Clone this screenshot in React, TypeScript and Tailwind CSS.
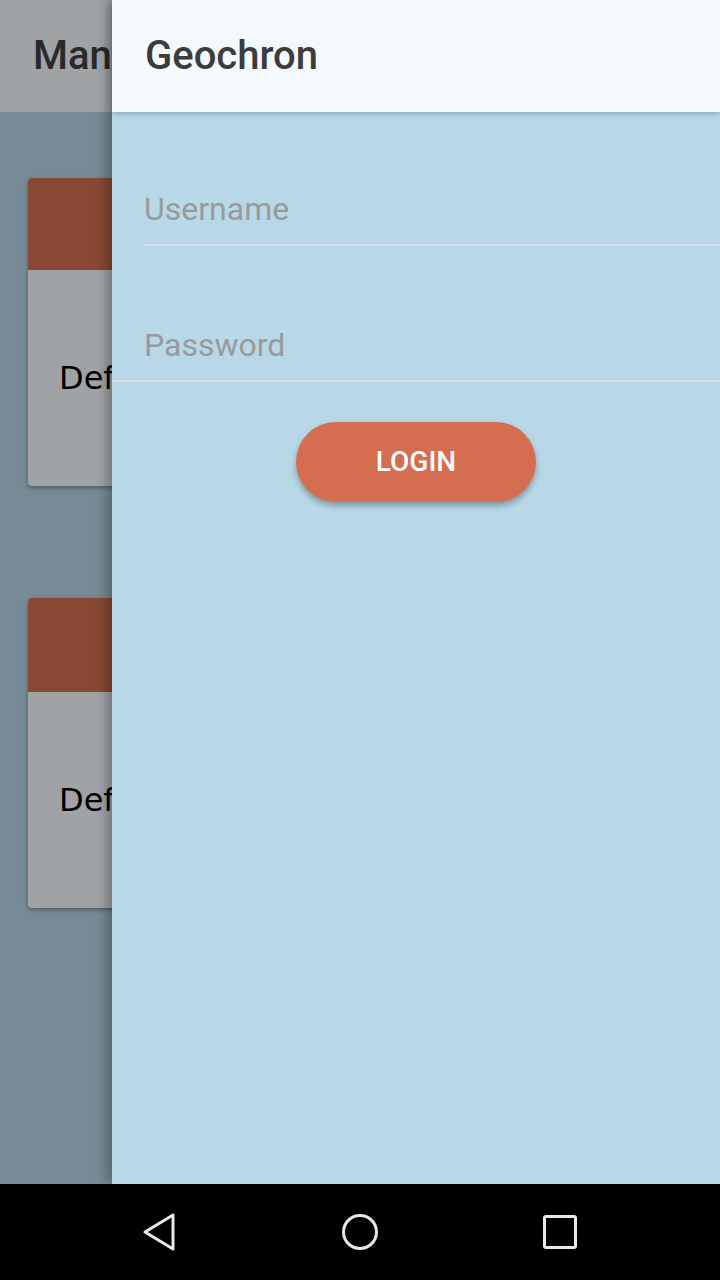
import React from "react";

const ROBOTO = { fontFamily: "Roboto, 'Noto Sans', sans-serif" };

function BackgroundCard({ top, red, h }: { top: string; red: string; h: string }) {
  return (
    <div className={`${top} ${h} flex flex-col overflow-hidden rounded-[4px] bg-[#a0a3a6] shadow-[0_2px_4px_rgba(0,0,0,0.35)]`}>
      <div className={`${red} bg-[#884834]`} />
      <div className="flex flex-1 items-center pl-[31px]">
        {/* only the part left of the drawer is visible */}
        <span className="whitespace-nowrap text-[32px] text-black" style={{ fontFamily: "'DejaVu Sans', sans-serif" }}>
          Def
        </span>
      </div>
    </div>
  );
}

function NavBar() {
  return (
    <div className="flex h-[96px] items-center justify-center gap-[160px] bg-black">
      <svg width="40" height="40" viewBox="0 0 40 40" fill="none">
        <path d="M33 3 L33 37 L5 20 Z" stroke="#e8e8e8" strokeWidth="3" strokeLinejoin="round" />
      </svg>
      <svg width="40" height="40" viewBox="0 0 40 40" fill="none">
        <circle cx="20" cy="20" r="16.5" stroke="#e8e8e8" strokeWidth="3" />
      </svg>
      <svg width="40" height="40" viewBox="0 0 40 40" fill="none">
        <rect x="4.5" y="4.5" width="31" height="31" rx="1.5" stroke="#e8e8e8" strokeWidth="3" />
      </svg>
    </div>
  );
}

export default function App() {
  return (
    <div className="flex h-[1280px] w-[720px] flex-col overflow-hidden" style={ROBOTO}>
      <div className="relative flex-1 overflow-hidden">
        {/* dimmed page behind the drawer */}
        <div className="flex h-full flex-col bg-[#778b96]">
          <div className="flex h-[112px] items-center bg-[#a0a3a5] pl-[33px]">
            <span className="whitespace-nowrap text-[40px] font-medium text-[#2a2a2a]">Man</span>
          </div>
          <div className="flex flex-col px-[28px]">
            <BackgroundCard top="mt-[66px]" red="h-[92px]" h="h-[308px]" />
            <BackgroundCard top="mt-[112px]" red="h-[94px]" h="h-[310px]" />
          </div>
        </div>

        {/* drawer */}
        <div className="absolute bottom-0 left-[112px] right-0 top-0 flex flex-col bg-[#b8d8e8] shadow-[-6px_0_10px_rgba(0,0,0,0.25)]">
          <div className="relative z-10 flex h-[112px] items-center bg-[#f4f9fe] pl-[33px] shadow-[0_2px_6px_rgba(0,0,0,0.22)]">
            <span className="text-[40px] font-medium text-[#3c3c3c]">Geochron</span>
          </div>

          <div className="ml-[32px] mt-[62px] flex h-[72px] items-center border-b-2 border-[#dcdcdc]">
            <span className="text-[32px] text-[#9a9a9a]">Username</span>
          </div>
          <div className="mt-[64px] flex h-[72px] items-center border-b-2 border-[#dcdcdc] pl-[32px]">
            <span className="text-[32px] text-[#9a9a9a]">Password</span>
          </div>

          <button className="mx-auto mt-[40px] flex h-[80px] w-[240px] items-center justify-center rounded-full bg-[#d56d51] text-[28px] font-medium text-white shadow-[0_4px_6px_rgba(0,0,0,0.3)]">
            LOGIN
          </button>
        </div>
      </div>
      <NavBar />
    </div>
  );
}
